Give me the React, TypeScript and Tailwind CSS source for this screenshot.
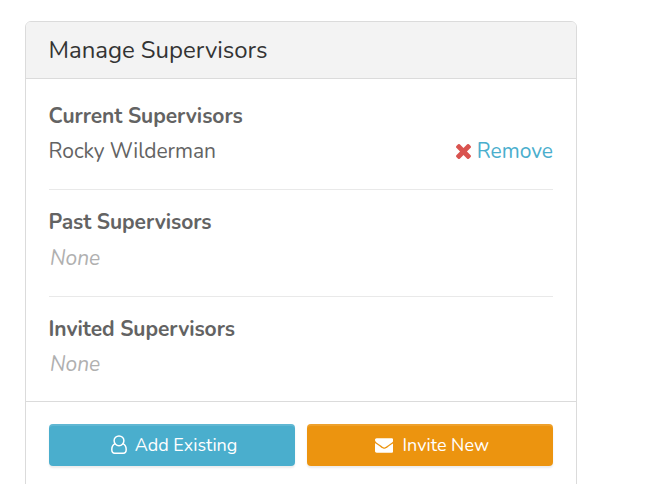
import type { ReactNode } from "react";

function RemoveIcon() {
  return (
    <svg viewBox="302 366 1188 1188" className="h-[15px] w-[15px] fill-[#d9534f]">
      <path d="M1490 1322q0 40-28 68l-136 136q-28 28-68 28t-68-28l-294-294-294 294q-28 28-68 28t-68-28l-136-136q-28-28-28-68t28-68l294-294-294-294q-28-28-28-68t28-68l136-136q28-28 68-28t68 28l294 294 294-294q28-28 68-28t68 28l136 136q28 28 28 68t-28 68l-294 294 294 294q28 28 28 68z" />
    </svg>
  );
}

function UserIcon() {
  return (
    <svg
      viewBox="0 0 16 19"
      className="mb-px h-[19px] w-4 fill-none stroke-white stroke-[1.5]"
    >
      <circle cx="8" cy="5.8" r="4.9" />
      <path d="M4.2 8.6C1.8 9.6.8 11.8.8 14.5c0 2.3 1.1 3.7 2.9 3.7h8.6c1.8 0 2.9-1.4 2.9-3.7 0-2.7-1-4.9-3.4-5.9" />
    </svg>
  );
}

function EnvelopeIcon() {
  return (
    <svg viewBox="0 256 1792 1408" className="h-[15px] w-[18.5px] fill-white">
      <path d="M1792 710v794q0 66-47 113t-113 47h-1472q-66 0-113-47t-47-113v-794q44 49 101 87 362 246 497 345 57 42 92.5 65.5t94.5 48 110 24.5h2q51 0 110-24.5t94.5-48 92.5-65.5q170-123 498-345 57-39 100-87zm0-294q0 79-49 151t-122 123q-376 261-468 325-10 7-42.5 31t-54 38.5-52 32.5-57.5 27-50 9h-2q-23 0-50-9t-57.5-27-52-32.5-54-38.5-42.5-31q-91-64-262-182.5t-205-142.5q-62-42-117-115.5t-55-136.5q0-78 41.5-130t118.5-52h1472q65 0 112.5 47t47.5 113z" />
    </svg>
  );
}

function Section({ title, children }: { title: string; children: ReactNode }) {
  return (
    <section className="h-[107px] border-b border-[#e9e9e9] pt-[15px] text-[21px] leading-[35px] first:pt-4 last:h-auto last:border-b-0">
      <h3 className="-ml-[0.5px] font-bold tracking-[-0.06px]">{title}</h3>
      {children}
    </section>
  );
}

function None({ className = "" }: { className?: string }) {
  return <p className={`pl-px text-[#b0b0b0] italic ${className}`}>None</p>;
}

export default function App() {
  return (
    <main className="h-[484px] overflow-hidden bg-white pt-[21px] pl-[25px] font-['Nunito','Lato',sans-serif] text-[#636363]">
      <div className="h-[500px] w-[552px] rounded-md border border-[#dbdbdb]">
        <header className="flex h-[57px] items-center rounded-t-[5px] border-b border-[#dbdbdb] bg-[#f3f3f3] px-[23px]">
          <h2 className="-ml-[0.5px] text-2xl tracking-[-0.04px] text-[#333]">
            Manage Supervisors
          </h2>
        </header>

        <div className="h-[323px] border-b border-[#dbdbdb] px-[23px] pt-[4px]">
          <Section title="Current Supervisors">
            <div className="flex items-center justify-between">
              <span className="-ml-[0.5px] tracking-[-0.05px]">
                Rocky Wilderman
              </span>
              <a href="#" className="flex items-center gap-[6px] text-[#4aaecd]">
                <RemoveIcon />
                <span>Remove</span>
              </a>
            </div>
          </Section>
          <Section title="Past Supervisors">
            <None className="pt-px" />
          </Section>
          <Section title="Invited Supervisors">
            <None />
          </Section>
        </div>

        <footer className="flex gap-3 px-[23px] pt-[22px] text-lg text-white">
          <button className="flex h-[42px] flex-1 items-center justify-center gap-2 rounded-[4px] bg-[#4aaecd] pl-[4px] shadow-[inset_0_2px_0_rgba(255,255,255,0.12),0_2px_2px_rgba(0,0,0,0.08)]">
            <UserIcon />
            <span>Add Existing</span>
          </button>
          <button className="flex h-[42px] flex-1 items-center justify-center gap-[9px] rounded-[4px] bg-[#ec940f] pl-[4px] shadow-[inset_0_2px_0_rgba(255,255,255,0.12),0_2px_2px_rgba(0,0,0,0.08)]">
            <EnvelopeIcon />
            <span>Invite New</span>
          </button>
        </footer>
      </div>
    </main>
  );
}
